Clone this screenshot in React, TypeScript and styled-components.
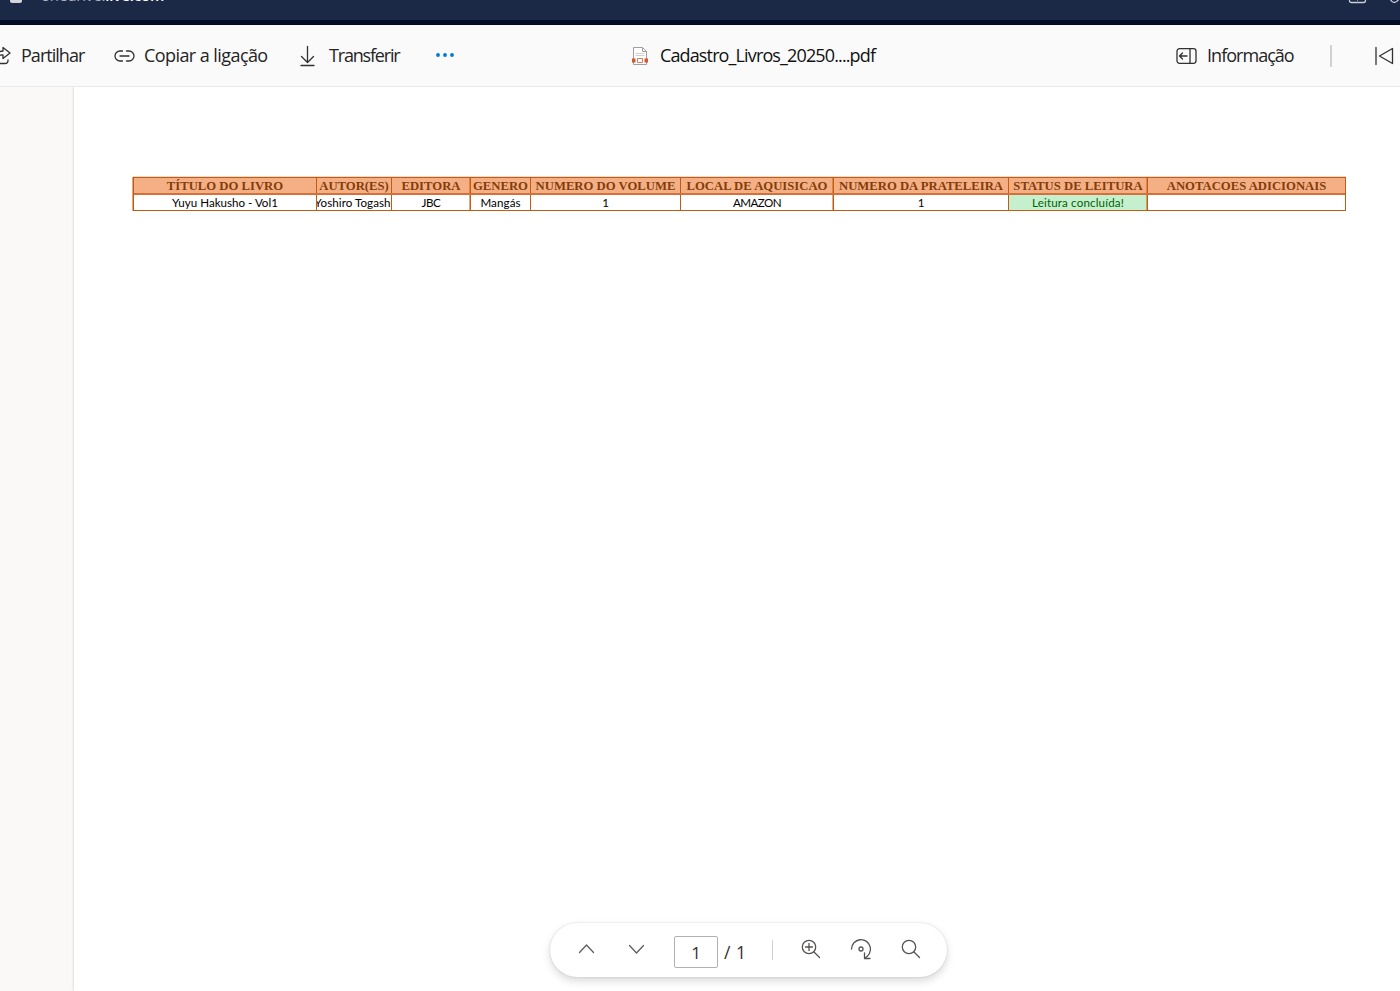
import React from 'react';
import styled, { createGlobalStyle } from 'styled-components';

const Global = createGlobalStyle`
  * { box-sizing: border-box; }
  html, body { margin: 0; height: 100%; overflow: hidden; background: #fff; }
  svg { display: block; flex: none; overflow: visible; }
`;

const Shell = styled.div`
  width: 1400px;
  height: 991px;
  display: flex;
  flex-direction: column;
  overflow: hidden;
  position: relative;
  font-family: 'Open Sans', 'Noto Sans', sans-serif;
`;

const BrowserBar = styled.header`
  height: 25px;
  flex: none;
  display: flex;
  align-items: flex-start;
  justify-content: space-between;
  background: #1b2947;
  border-bottom: 5px solid #030d26;
  overflow: hidden;
`;

const Address = styled.div`
  display: flex;
  align-items: flex-start;
  gap: 19px;
  padding-left: 10px;
`;

const Lock = styled.span`
  width: 12px;
  height: 3px;
  border-radius: 0 0 2px 2px;
  background: #d3d5da;
`;

const Url = styled.span`
  margin-top: -15px;
  font-size: 15px;
  line-height: 20px;
  letter-spacing: -0.15px;
  color: #a9b3c2;
  b { color: #fff; font-weight: 600; }
`;

const Toolbar = styled.nav`
  height: 62px;
  flex: none;
  display: flex;
  align-items: center;
  background: #fafafa;
  border-bottom: 1px solid #e8e8e8;
`;

const Command = styled.div<{ $ml?: number; $gap: number }>`
  display: flex;
  align-items: center;
  gap: ${p => p.$gap}px;
  margin-left: ${p => p.$ml ?? 0}px;
`;

const Label = styled.span<{ $w: number; $ls: number; $dark?: boolean }>`
  width: ${p => p.$w}px;
  padding-bottom: 2px;
  font-size: 18px;
  line-height: 24px;
  letter-spacing: ${p => p.$ls}px;
  white-space: nowrap;
  color: ${p => (p.$dark ? '#111' : '#242424')};
`;

const Separator = styled.span<{ $h: number; $ml: number; $w: number }>`
  width: ${p => p.$w}px;
  height: ${p => p.$h}px;
  margin-left: ${p => p.$ml}px;
  background: #d2d0ce;
`;

const Viewer = styled.main`
  flex: 1;
  display: flex;
  background: #faf9f8;
`;

const Page = styled.section`
  flex: 1;
  margin-left: 74px;
  padding: 90px 0 0 59px;
  background: #fff;
  box-shadow: 0 0 3px rgba(0, 0, 0, 0.2);
  clip-path: inset(0 0 0 -6px);
`;

const Sheet = styled.div`
  width: 1213px;
  border: 1px solid #c55a11;
  box-shadow: 0 -1px 0 #f3d9cb, -1px 0 0 #e0a37c;
`;

const SheetRow = styled.div<{ $head?: boolean }>`
  display: grid;
  grid-template-columns: 183px 75px 79px 60px 150px 153px 175px 139px 197px;
  height: ${p => (p.$head ? 17 : 15)}px;
  border-bottom: ${p => (p.$head ? '2px solid #d4713a' : '0')};
  background: ${p => (p.$head ? '#f4b084' : '#fff')};
`;

const Cell = styled.div<{ $head?: boolean; $good?: boolean; $soft?: boolean; $ls?: number }>`
  display: flex;
  align-items: center;
  justify-content: center;
  overflow: hidden;
  white-space: nowrap;
  border-right: 1px solid #c55a11;
  box-shadow: ${p => (p.$soft ? 'inset -1px 0 0 rgba(197, 90, 17, 0.5)' : 'none')};
  &:last-child { border-right: 0; }
  padding-top: ${p => (p.$head ? 2 : 0)}px;
  font-family: ${p => (p.$head ? "'Liberation Serif', serif" : "Lato, sans-serif")};
  font-weight: ${p => (p.$head ? 700 : 400)};
  font-size: ${p => (p.$head ? 12.7 : 11.6)}px;
  line-height: 15px;
  letter-spacing: ${p => p.$ls ?? 0}px;
  color: ${p => (p.$head ? '#843c0c' : p.$good ? '#006100' : '#000')};
  background: ${p => (p.$good ? '#c6efce' : 'transparent')};
`;

const Controls = styled.div`
  position: absolute;
  left: 550px;
  top: 923px;
  width: 397px;
  height: 54px;
  border-radius: 27px;
  background: #fff;
  box-shadow: 0 0 2px rgba(0, 0, 0, 0.16), 0 4px 9px rgba(0, 0, 0, 0.15);
  display: flex;
  align-items: center;
  padding-left: 26px;
`;

const ControlIcon = styled.span<{ $ml?: number }>`
  display: flex;
  margin: -3px 0 0 ${p => p.$ml ?? 0}px;
`;

const PageBox = styled.span`
  width: 44px;
  height: 32px;
  margin: 4px 0 0 27px;
  border: 1px solid #b3b0ad;
  border-radius: 2px;
  display: flex;
  align-items: center;
  justify-content: center;
  font-size: 17px;
  color: #323130;
`;

const PageTotal = styled.span`
  width: 24px;
  margin: 3px 0 0 6px;
  font-size: 17.5px;
  line-height: 24px;
  letter-spacing: 0.5px;
  white-space: nowrap;
  color: #323130;
`;

const Icon = ({ w, h, children, c = '#323130', sw = 1.3 }: {
  w: number; h: number; children: React.ReactNode; c?: string; sw?: number;
}) => (
  <svg width={w} height={h} viewBox={`0 0 ${w} ${h}`} fill="none" stroke={c} strokeWidth={sw} strokeLinecap="round" strokeLinejoin="round">
    {children}
  </svg>
);

const columns: { title: string; value: string; vls?: number; good?: boolean; soft?: boolean }[] = [
  { title: 'TÍTULO DO LIVRO', value: 'Yuyu Hakusho - Vol1' },
  { title: 'AUTOR(ES)', value: 'Yoshiro Togashi', vls: 0.05 },
  { title: 'EDITORA', value: 'JBC', vls: -0.4, soft: true },
  { title: 'GENERO', value: 'Mangás', vls: 0.1 },
  { title: 'NUMERO DO VOLUME', value: '1' },
  { title: 'LOCAL DE AQUISICAO', value: 'AMAZON', vls: -0.6, soft: true },
  { title: 'NUMERO DA PRATELEIRA', value: '1' },
  { title: 'STATUS DE LEITURA', value: 'Leitura concluída!', vls: 0.15, good: true, soft: true },
  { title: 'ANOTACOES ADICIONAIS', value: '' },
];

export default function App() {
  return (
    <Shell>
      <Global />
      <BrowserBar>
        <Address>
          <Lock />
          <Url>onedrive.<b>live.com</b></Url>
        </Address>
        <Icon w={52} h={5} c="#c9cdd5" sw={1.3}>
          <path d="M1.5 -9V.5Q1.5 2.5 3.5 2.5H15.500Q17.500 2.500 17.500 .5V-9M9.500-9V0M42-1Q46 6 51-1" />
        </Icon>
      </BrowserBar>

      <Toolbar>
        <Command $gap={10}>
          <Icon w={11} h={20}>
            <path d="M-5 11Q-3 5 3 5V1.500L10 7L3 12.500V9Q-2 9-5 11M-7 4V14Q-7 17.500-4 17.500H5Q8 17.500 8 14.500V14" />
          </Icon>
          <Label $w={64} $ls={-0.97}>Partilhar</Label>
        </Command>
        <Command $ml={29} $gap={9}>
          <Icon w={21} h={12}>
            <path d="M8.500 1H6A5 5 0 0 0 6 11H8.500M12.500 1H15A5 5 0 0 1 15 11H12.500M6 6H15" />
          </Icon>
          <Label $w={126} $ls={-0.57}>Copiar a ligação</Label>
        </Command>
        <Command $ml={30} $gap={14}>
          <Icon w={15} h={20}>
            <path d="M7.500 .5V16M1.500 10.500L7.500 16.500L13.500 10.500M1 19.500H14" />
          </Icon>
          <Label $w={72} $ls={-1.18}>Transferir</Label>
        </Command>
        <Command $ml={35} $gap={0}>
          <svg width="18" height="5" viewBox="0 0 18 5" fill="#0078d4">
            <circle cx="2" cy="2" r="1.900" /><circle cx="9" cy="2" r="1.900" /><circle cx="16" cy="2" r="1.900" />
          </svg>
        </Command>
        <Command $ml={178} $gap={12}>
          <svg width="16" height="18" viewBox="0 0 16 18" fill="none">
            <path d="M1.500 .5H10.500L14.500 4.500V17.500H1.500Z" fill="#fff" stroke="#a19f9d" />
            <path d="M10.500 .5V4.500H14.500" stroke="#a19f9d" />
            <path d="M3.500 6.500H12.500M3.500 8.500H12.500" stroke="#d2d0ce" />
            <path d="M0 11.500H3.500V15.500H0ZM12.500 11.500H16V15.500H12.500Z" fill="#d65532" />
            <path d="M5.500 11.500H10.500V15.500H5.500Z" stroke="#e07a5f" fill="#fff" />
          </svg>
          <Label $w={219} $ls={-0.87} $dark>Cadastro_Livros_20250....pdf</Label>
        </Command>
        <Command $ml={297} $gap={10}>
          <Icon w={21} h={16}>
            <rect x="1" y=".7" width="19" height="14.600" rx="2.500" />
            <path d="M14 1V15M11 8H4M6.500 5L3.500 8L6.500 11" />
          </Icon>
          <Label $w={88} $ls={-0.97}>Informação</Label>
        </Command>
        <Separator $h={22} $ml={35} $w={2} />
        <Command $ml={43} $gap={0}>
          <Icon w={19} h={18}>
            <path d="M1 .5V17.500M17.500 1.500V16.500L4.500 9Z" />
          </Icon>
        </Command>
      </Toolbar>

      <Viewer>
        <Page>
          <Sheet>
            <SheetRow $head>
              {columns.map(c => <Cell key={c.title} $head $soft={c.soft}>{c.title}</Cell>)}
            </SheetRow>
            <SheetRow>
              {columns.map(c => <Cell key={c.title} $good={c.good} $soft={c.soft} $ls={c.vls}>{c.value}</Cell>)}
            </SheetRow>
          </Sheet>
        </Page>
      </Viewer>

      <Controls>
        <ControlIcon><Icon w={21} h={20} c="#605e5c"><path d="M3.500 13.500L10.500 6L17.500 13.500" /></Icon></ControlIcon>
        <ControlIcon $ml={29}><Icon w={21} h={20} c="#605e5c"><path d="M3.500 6.500L10.500 14L17.500 6.500" /></Icon></ControlIcon>
        <PageBox>1</PageBox>
        <PageTotal>/ 1</PageTotal>
        <Separator $h={20} $ml={24} $w={1} />
        <ControlIcon $ml={28}>
          <Icon w={20} h={20} c="#555351">
            <circle cx="8" cy="8" r="6.700" /><path d="M13 13L18.500 18.500M8 4.500V11.500M4.500 8H11.500" />
          </Icon>
        </ControlIcon>
        <ControlIcon $ml={29}>
          <Icon w={22} h={22} c="#555351">
            <path d="M1.500 11A9.500 9.500 0 1 1 14.500 20M14.500 15V20.500H20" /><circle cx="11" cy="11" r="2" />
          </Icon>
        </ControlIcon>
        <ControlIcon $ml={29}>
          <Icon w={20} h={20} c="#555351">
            <circle cx="8" cy="8" r="6.700" /><path d="M13 13L18.500 18.500" />
          </Icon>
        </ControlIcon>
      </Controls>
    </Shell>
  );
}
